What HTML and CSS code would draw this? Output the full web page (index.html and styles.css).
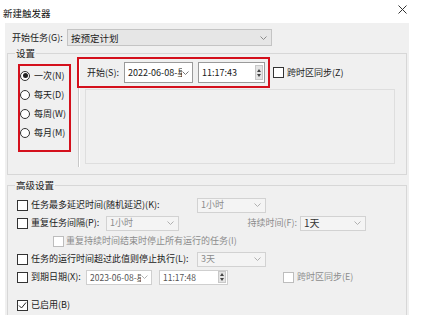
FILE: index.html
```html
<!DOCTYPE html>
<html lang="zh-CN">
<head>
<meta charset="utf-8">
<title>新建触发器</title>
<link rel="stylesheet" href="styles.css">
</head>
<body>
<div class="titlebar">
  <span class="title">新建触发器</span>
  <svg class="close" width="9" height="9" viewBox="0 0 9 9"><path d="M0.5 0.5L8.5 8.5M8.5 0.5L0.5 8.5" stroke="#333" stroke-width="1" fill="none"/></svg>
</div>
<div class="panel">
  <div class="row-task">
    <span class="task-label">开始任务(G):</span>
    <div class="combo combo-task"><span class="combo-text">按预定计划</span><svg class="chev" width="7" height="4" viewBox="0 0 7 4"><path d="M0.5 0.5L3.5 3.5L6.5 0.5" stroke="#8a8a8a" fill="none"/></svg></div>
  </div>

  <div class="group group1">
    <span class="group-label">设置</span>
    <div class="g1-body">
      <div class="radios">
        <div class="radio-row"><span class="radio checked"></span><span>一次(N)</span></div>
        <div class="radio-row"><span class="radio"></span><span>每天(D)</span></div>
        <div class="radio-row"><span class="radio"></span><span>每周(W)</span></div>
        <div class="radio-row"><span class="radio"></span><span>每月(M)</span></div>
      </div>
      <div class="vsep"></div>
      <div class="right">
        <div class="start-row">
          <span class="start-label">开始(S):</span>
          <div class="field date date-start"><span class="ftext">2022-06-08-星期三</span><svg class="chev" width="7" height="4" viewBox="0 0 7 4"><path d="M0.5 0.5L3.5 3.5L6.5 0.5" stroke="#777" fill="none"/></svg></div>
          <div class="field time time-start"><span class="ftext">11:17:43</span><span class="spin"><i class="up"></i><i class="down"></i></span></div>
          <span class="cb"></span>
          <span class="cb-text">跨时区同步(Z)</span>
        </div>
        <div class="inner-box"></div>
      </div>
    </div>
    <div class="redbox red1"></div>
    <div class="redbox red2"></div>
  </div>

  <div class="group group2">
    <span class="group-label">高级设置</span>
    <div class="g2-body">
      <div class="arow">
        <span class="cb"></span>
        <span class="alabel w166">任务最多延迟时间(随机延迟)(K):</span>
        <div class="combo dis w69"><span class="combo-text">1小时</span><svg class="chev" width="7" height="4" viewBox="0 0 7 4"><path d="M0.5 0.5L3.5 3.5L6.5 0.5" stroke="#b0b0b0" fill="none"/></svg></div>
      </div>
      <div class="arow">
        <span class="cb"></span>
        <span class="alabel w75">重复任务间隔(P):</span>
        <div class="combo dis w73"><span class="combo-text">1小时</span><svg class="chev" width="7" height="4" viewBox="0 0 7 4"><path d="M0.5 0.5L3.5 3.5L6.5 0.5" stroke="#b0b0b0" fill="none"/></svg></div>
        <span class="alabel gray dur">持续时间(F):</span>
        <div class="combo dis w66"><span class="combo-text dark">1天</span><svg class="chev" width="7" height="4" viewBox="0 0 7 4"><path d="M0.5 0.5L3.5 3.5L6.5 0.5" stroke="#b0b0b0" fill="none"/></svg></div>
      </div>
      <div class="arow indent">
        <span class="cb cb-dis"></span>
        <span class="alabel gray">重复持续时间结束时停止所有运行的任务(I)</span>
      </div>
      <div class="arow">
        <span class="cb"></span>
        <span class="alabel w166">任务的运行时间超过此值则停止执行(L):</span>
        <div class="combo dis w69"><span class="combo-text">3天</span><svg class="chev" width="7" height="4" viewBox="0 0 7 4"><path d="M0.5 0.5L3.5 3.5L6.5 0.5" stroke="#b0b0b0" fill="none"/></svg></div>
      </div>
      <div class="arow">
        <span class="cb"></span>
        <span class="alabel w55">到期日期(X):</span>
        <div class="field sm date-exp"><span class="ftext gray2">2023-06-08-星期四</span><svg class="chev" width="7" height="4" viewBox="0 0 7 4"><path d="M0.5 0.5L3.5 3.5L6.5 0.5" stroke="#b0b0b0" fill="none"/></svg></div>
        <div class="field sm time-exp"><span class="ftext gray2">11:17:48</span><span class="spin"><i class="up"></i><i class="down"></i></span></div>
        <span class="cb cb-dis tz2"></span>
        <span class="alabel gray">跨时区同步(E)</span>
      </div>
      <div class="arow enabled">
        <span class="cb checked"><svg width="9" height="9" viewBox="0 0 9 9"><path d="M1 4.5L3.5 7L8 1.5" stroke="#222" stroke-width="1" fill="none"/></svg></span>
        <span class="alabel">已启用(B)</span>
      </div>
    </div>
  </div>
</div>
</body>
</html>
```

FILE: styles.css
```css
* { box-sizing: border-box; }
html, body { margin: 0; padding: 0; }
body {
  width: 430px;
  height: 315px;
  overflow: hidden;
  background: #ffffff;
  font-family: "Noto Sans CJK SC", "Noto Sans", sans-serif;
  font-size: 9px;
  line-height: 12px;
  color: #1a1a1a;
}

.titlebar {
  height: 23px;
  display: flex;
  align-items: center;
  justify-content: space-between;
  padding: 2px 23px 0 3px;
}
.title { font-size: 9.5px; color: #111; }
.close { display: block; margin-top: -6px; }

.panel {
  margin-left: 5px;
  width: 404px;
  height: 292px;
  background: #f0f0f0;
  padding-top: 6px;
  overflow: hidden;
}

.row-task {
  display: flex;
  align-items: center;
  height: 17px;
  padding-left: 7px;
}
.task-label { width: 55px; }

.combo {
  height: 17px;
  display: flex;
  align-items: center;
  justify-content: space-between;
  padding: 0 4px 0 3px;
  border: 1px solid #c9c9c9;
}
.combo-task {
  width: 205px;
  background: #e6e6e6;
  border-color: #c4c4c4;
  font-size: 9.5px;
}
.combo-text { white-space: nowrap; }
.chev { display: block; flex: none; }

.group {
  position: relative;
  margin-left: 2px;
  width: 400px;
  border: 1px solid #d7d7d7;
}
.group-label {
  position: absolute;
  left: 7px;
  top: -7px;
  padding: 0 1px;
  background: #f0f0f0;
  font-size: 9.5px;
  line-height: 12px;
}
.group1 {
  margin-top: 7px;
  height: 122px;
}
.g1-body { display: flex; }

.radios {
  width: 70px;
  padding-top: 12px;
  padding-left: 12px;
}
.radio-row {
  height: 19px;
  display: flex;
  align-items: center;
  gap: 4px;
}
.radio {
  width: 10px;
  height: 10px;
  border: 1px solid #333;
  border-radius: 50%;
  background: #fff;
  display: flex;
  align-items: center;
  justify-content: center;
}
.radio.checked::after {
  content: "";
  width: 5px;
  height: 5px;
  border-radius: 50%;
  background: #222;
}

.vsep {
  margin-top: 6px;
  width: 2px;
  height: 107px;
  border-left: 1px solid #c8c8c8;
  border-right: 1px solid #ffffff;
}

.right { padding-top: 8px; }
.start-row {
  height: 21px;
  display: flex;
  align-items: center;
  padding-left: 7px;
}
.start-label { width: 37px; }

.field {
  height: 21px;
  display: flex;
  align-items: center;
  justify-content: space-between;
  background: #ffffff;
  border: 1px solid #9a9a9a;
  padding: 0 3px 0 3px;
  overflow: hidden;
}
.ftext {
  white-space: nowrap;
  overflow: hidden;
  flex: 1;
  min-width: 0;
}
.date-start { width: 69px; }
.time-start { width: 67px; margin-left: 5px; padding-right: 1px; }
.spin {
  width: 8px;
  height: 15px;
  background: #e4e4e4;
  border: 1px solid #c8c8c8;
  display: flex;
  flex-direction: column;
  align-items: center;
  justify-content: center;
  gap: 2px;
}
.spin i {
  display: block;
  width: 0;
  height: 0;
  border-left: 2px solid transparent;
  border-right: 2px solid transparent;
}
.spin .up { border-bottom: 3px solid #444; }
.spin .down { border-top: 3px solid #444; }

.cb {
  width: 11px;
  height: 11px;
  border: 1px solid #333;
  background: #fff;
  flex: none;
  display: flex;
  align-items: center;
  justify-content: center;
}
.cb-dis { border-color: #bdbdbd; }
.start-row .cb { margin-left: 8px; }
.cb-text { margin-left: 3px; }

.inner-box {
  margin-top: 6px;
  margin-left: 5px;
  width: 310px;
  height: 75px;
  border: 1px solid #dedede;
}

.redbox {
  position: absolute;
  border: 2px solid #d4101c;
}
.red1 { left: 10px; top: 10px; width: 53px; height: 88px; }
.red2 { left: 69px; top: 3px; width: 193px; height: 31px; }

.group2 {
  margin-top: 10px;
  height: 150px;
}
.g2-body { padding-top: 10px; }
.arow {
  height: 18px;
  display: flex;
  align-items: center;
  padding-left: 9px;
}
.arow .cb { margin-right: 3px; }
.alabel { white-space: nowrap; }
.w166 { width: 166px; }
.w75 { width: 75px; }
.w55 { width: 55px; }
.combo.dis {
  height: 15px;
  background: #f4f4f4;
  border-color: #d2d2d2;
  color: #8c8c8c;
}
.w69 { width: 69px; }
.w73 { width: 73px; }
.w66 { width: 66px; }
.dark { color: #333; font-size: 10px; }
.gray { color: #8c8c8c; }
.gray2 { color: #555; }
.dur { width: 121px; text-align: right; padding-right: 3px; }
.indent { padding-left: 45px; }
.indent .cb { margin-right: 2px; }

.field.sm {
  height: 15px;
  border-color: #cfcfcf;
  font-size: 8.5px;
}
.date-exp { width: 66px; }
.time-exp { width: 69px; margin-left: 7px; padding-right: 1px; }
.time-exp .spin { height: 12px; }
.arow .tz2 { margin-left: 55px; }
.enabled { margin-top: 10px; }
```
